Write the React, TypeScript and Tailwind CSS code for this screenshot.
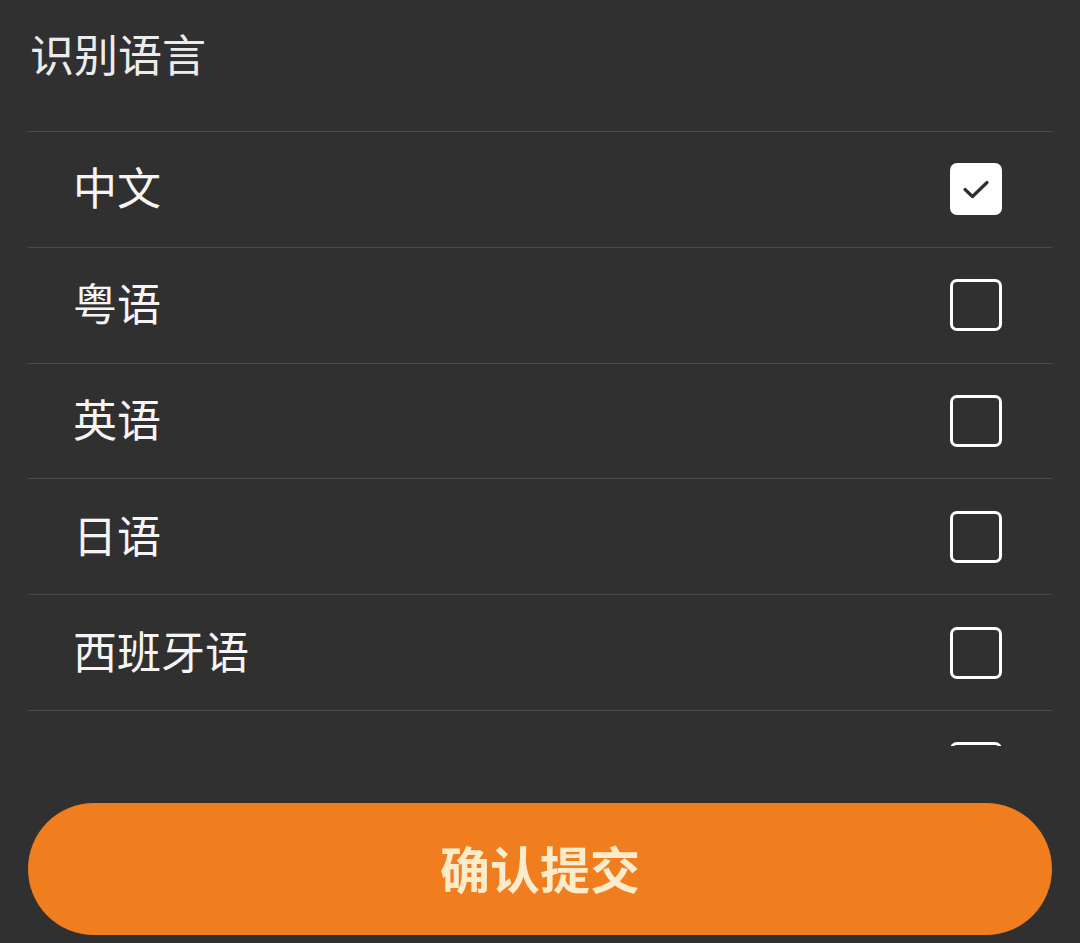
import { useState } from "react";

const languages = ["中文", "粤语", "英语", "日语", "西班牙语", "韩语"];

function CheckBox({ checked }: { checked: boolean }) {
  return (
    <div
      className={
        checked
          ? "w-[52px] h-[52px] rounded-[7px] bg-white flex items-center justify-center"
          : "w-[52px] h-[52px] rounded-[7px] border-[3px] border-white"
      }
    >
      {checked && (
        <svg width="30" height="30" viewBox="0 0 30 30" fill="none">
          <path
            d="M4 15.5 L11.5 22.5 L26 8.5"
            stroke="#2f2f2f"
            strokeWidth="3.2"
            strokeLinecap="round"
            strokeLinejoin="round"
          />
        </svg>
      )}
    </div>
  );
}

export default function App() {
  const [selected, setSelected] = useState<string[]>(["中文"]);

  const toggle = (lang: string) => {
    setSelected((prev) =>
      prev.includes(lang) ? prev.filter((l) => l !== lang) : [...prev, lang]
    );
  };

  return (
    <div
      className="w-full h-[943px] bg-[#303030] flex flex-col overflow-hidden"
      style={{ fontFamily: '"Noto Sans CJK SC", "Noto Sans", sans-serif' }}
    >
      {/* Title */}
      <div className="h-[131px] px-[30px] pt-[21px]">
        <h1 className="text-[44px] leading-[64px] font-normal text-[#ececec]">识别语言</h1>
      </div>

      <div className="mx-[28px] h-[615px] overflow-hidden border-t border-[#4a4a4a]">
        {languages.map((lang) => (
          <button
            key={lang}
            type="button"
            onClick={() => toggle(lang)}
            className="w-full h-[115.8px] flex items-center justify-between pl-[45px] pr-[50px] border-b border-[#4a4a4a] text-left"
          >
            <span className="text-[44px] leading-none text-[#f5f5f5] mb-[6px]">{lang}</span>
            <CheckBox checked={selected.includes(lang)} />
          </button>
        ))}
      </div>

      {/* Submit */}
      <div className="px-[28px] pt-[57px]">
        <button
          type="button"
          className="w-full h-[132px] rounded-full bg-[#f07e1f] flex items-center justify-center"
        >
          <span className="text-[50px] font-bold text-[#fdeccb] mb-[4px]">确认提交</span>
        </button>
      </div>
    </div>
  );
}
